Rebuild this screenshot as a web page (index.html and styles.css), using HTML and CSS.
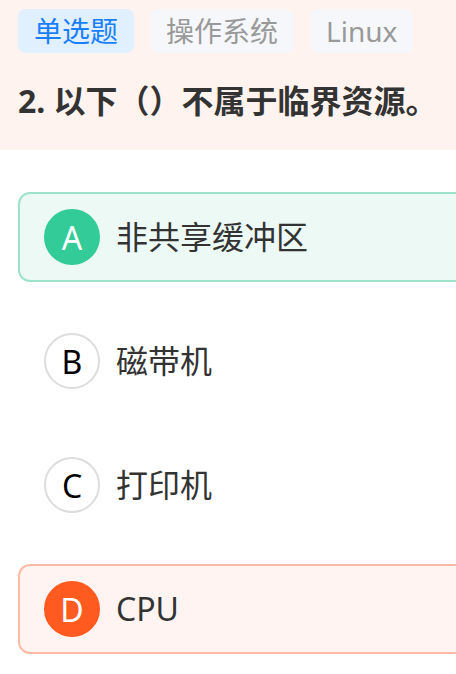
FILE: index.html
```html
<!DOCTYPE html>
<html lang="zh-CN">
<head>
<meta charset="utf-8">
<title>单选题</title>
<link rel="stylesheet" href="styles.css">
</head>
<body>
<div class="page">
  <header class="head">
    <div class="tags">
      <span class="tag tag-type">单选题</span>
      <span class="tag">操作系统</span>
      <span class="tag">Linux</span>
    </div>
    <h1 class="title">2. 以下（）不属于临界资源。</h1>
  </header>
  <ul class="options">
    <li class="option option-right"><span class="mark">A</span><span class="label">非共享缓冲区</span></li>
    <li class="option"><span class="mark">B</span><span class="label">磁带机</span></li>
    <li class="option"><span class="mark">C</span><span class="label">打印机</span></li>
    <li class="option option-wrong"><span class="mark">D</span><span class="label">CPU</span></li>
  </ul>
</div>
</body>
</html>
```
FILE: styles.css
```css
html, body {
  margin: 0;
  padding: 0;
  overflow: hidden;
  background: #ffffff;
}
body {
  font-family: "Noto Sans", "Noto Sans CJK SC", sans-serif;
  color: #333333;
}
.page {
  width: 456px;
}
.head {
  background: #fff3ef;
  padding: 9px 18px 25px;
}
.tags {
  display: flex;
  gap: 16px;
  margin-bottom: 24px;
}
.tag {
  height: 44px;
  line-height: 44px;
  padding: 0 16px;
  border-radius: 8px;
  background: #f5f7fa;
  color: #999999;
  font-size: 28px;
  font-family: "Noto Sans", "Noto Sans CJK SC", sans-serif;
}
.tag-type {
  background: #e0f0ff;
  color: #1a7fff;
}
.title {
  margin: 0;
  font-size: 32px;
  line-height: 48px;
  font-weight: 700;
  color: #333333;
  white-space: nowrap;
}
.options {
  list-style: none;
  margin: 0;
  padding: 42px 0 0 18px;
  display: flex;
  flex-direction: column;
  gap: 34px;
}
.option {
  width: 700px;
  height: 90px;
  box-sizing: border-box;
  border: 2px solid transparent;
  border-radius: 12px;
  padding: 0 24px;
  display: flex;
  align-items: center;
  gap: 16px;
}
.option-right {
  border-color: #9de3c9;
  background: #edf9f5;
}
.option-wrong {
  border-color: #ffbba3;
  background: #fff4f1;
}
.mark {
  width: 56px;
  height: 56px;
  box-sizing: border-box;
  border-radius: 50%;
  border: 2px solid #dddddd;
  display: flex;
  align-items: center;
  justify-content: center;
  font-size: 32px;
  color: #000000;
  flex: none;
}
.option-right .mark {
  background: #33cc99;
  border-color: #33cc99;
  color: #ffffff;
}
.option-wrong .mark {
  background: #ff5a1f;
  border-color: #ff5a1f;
  color: #ffffff;
}
.label {
  font-size: 32px;
  line-height: 48px;
  color: #333333;
}
```
